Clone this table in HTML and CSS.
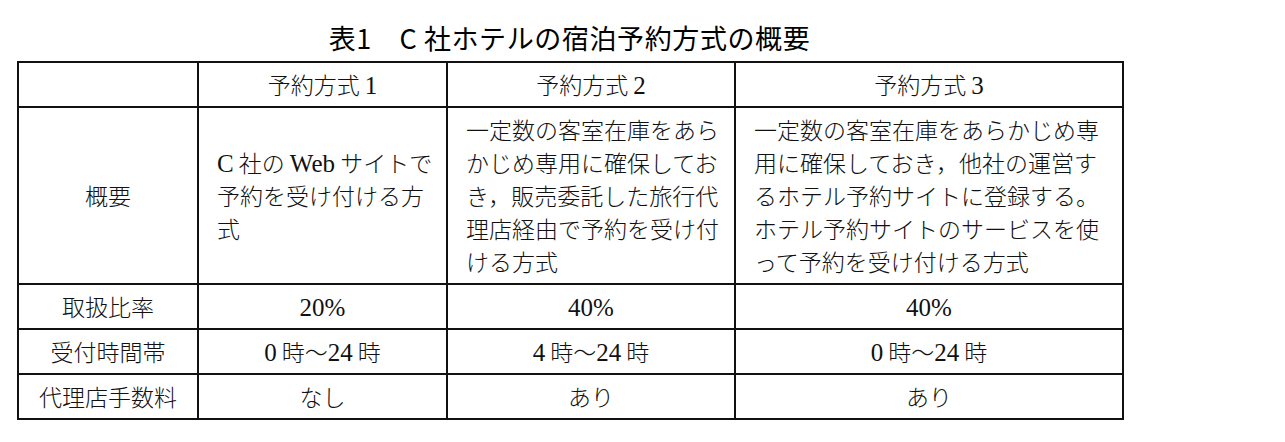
FILE: index.html
```html
<!DOCTYPE html>
<html lang="ja">
<head>
<meta charset="utf-8">
<title>表1 C社ホテルの宿泊予約方式の概要</title>
<link rel="stylesheet" href="styles.css">
</head>
<body>
<div class="page">
  <h1 class="title">表1　C 社ホテルの宿泊予約方式の概要</h1>
  <table class="summary">
    <colgroup>
      <col class="c1"><col class="c2"><col class="c3"><col class="c4">
    </colgroup>
    <tr class="row-head">
      <td></td>
      <td class="center">予約方式 <span class="num">1</span></td>
      <td class="center">予約方式 <span class="num">2</span></td>
      <td class="center">予約方式 <span class="num">3</span></td>
    </tr>
    <tr class="row-desc">
      <td class="center">概要</td>
      <td class="left"><span class="num">C</span> 社の <span class="num">Web</span> サイトで<br>予約を受け付ける方<br>式</td>
      <td class="left">一定数の客室在庫をあら<br>かじめ専用に確保してお<br>き，販売委託した旅行代<br>理店経由で予約を受け付<br>ける方式</td>
      <td class="left">一定数の客室在庫をあらかじめ専<br>用に確保しておき，他社の運営す<br>るホテル予約サイトに登録する。<br>ホテル予約サイトのサービスを使<br>って予約を受け付ける方式</td>
    </tr>
    <tr class="row">
      <td class="center">取扱比率</td>
      <td class="center"><span class="num">20%</span></td>
      <td class="center"><span class="num">40%</span></td>
      <td class="center"><span class="num">40%</span></td>
    </tr>
    <tr class="row">
      <td class="center">受付時間帯</td>
      <td class="center"><span class="num">0</span> 時～<span class="num">24</span> 時</td>
      <td class="center"><span class="num">4</span> 時～<span class="num">24</span> 時</td>
      <td class="center"><span class="num">0</span> 時～<span class="num">24</span> 時</td>
    </tr>
    <tr class="row">
      <td class="center">代理店手数料</td>
      <td class="center">なし</td>
      <td class="center">あり</td>
      <td class="center">あり</td>
    </tr>
  </table>
</div>
</body>
</html>
```

FILE: styles.css
```css
html, body {
  margin: 0;
  padding: 0;
  background: #ffffff;
}

.page {
  width: 1105px;
  margin-left: 17px;
  padding-top: 19px;
  color: #111111;
}

.title {
  margin: 0 0 5px 0;
  text-align: center;
  font-family: "Noto Sans CJK JP", "Liberation Sans", sans-serif;
  font-weight: 400;
  font-size: 27px;
  line-height: 37px;
  letter-spacing: 0.6px;
  color: #000000;
}

.summary {
  width: 1105px;
  border-collapse: collapse;
  table-layout: fixed;
  font-family: "Noto Sans CJK JP", sans-serif;
  font-weight: 300;
  font-size: 23px;
  line-height: 33px;
}

.num {
  font-family: "Liberation Serif", serif;
  font-weight: 400;
  font-size: 25px;
  line-height: 1;
}

.c1 { width: 180px; }
.c2 { width: 249px; }
.c3 { width: 288px; }
.c4 { width: 388px; }

.summary td {
  border: 2px solid #111111;
  padding: 0;
  vertical-align: middle;
}

.summary td.center {
  text-align: center;
}

.summary td.left {
  text-align: left;
  padding: 0 10px 0 18px;
}

.row-head td {
  height: 43px;
}

.row-desc td {
  height: 175px;
}

.row td {
  height: 43px;
}
```
